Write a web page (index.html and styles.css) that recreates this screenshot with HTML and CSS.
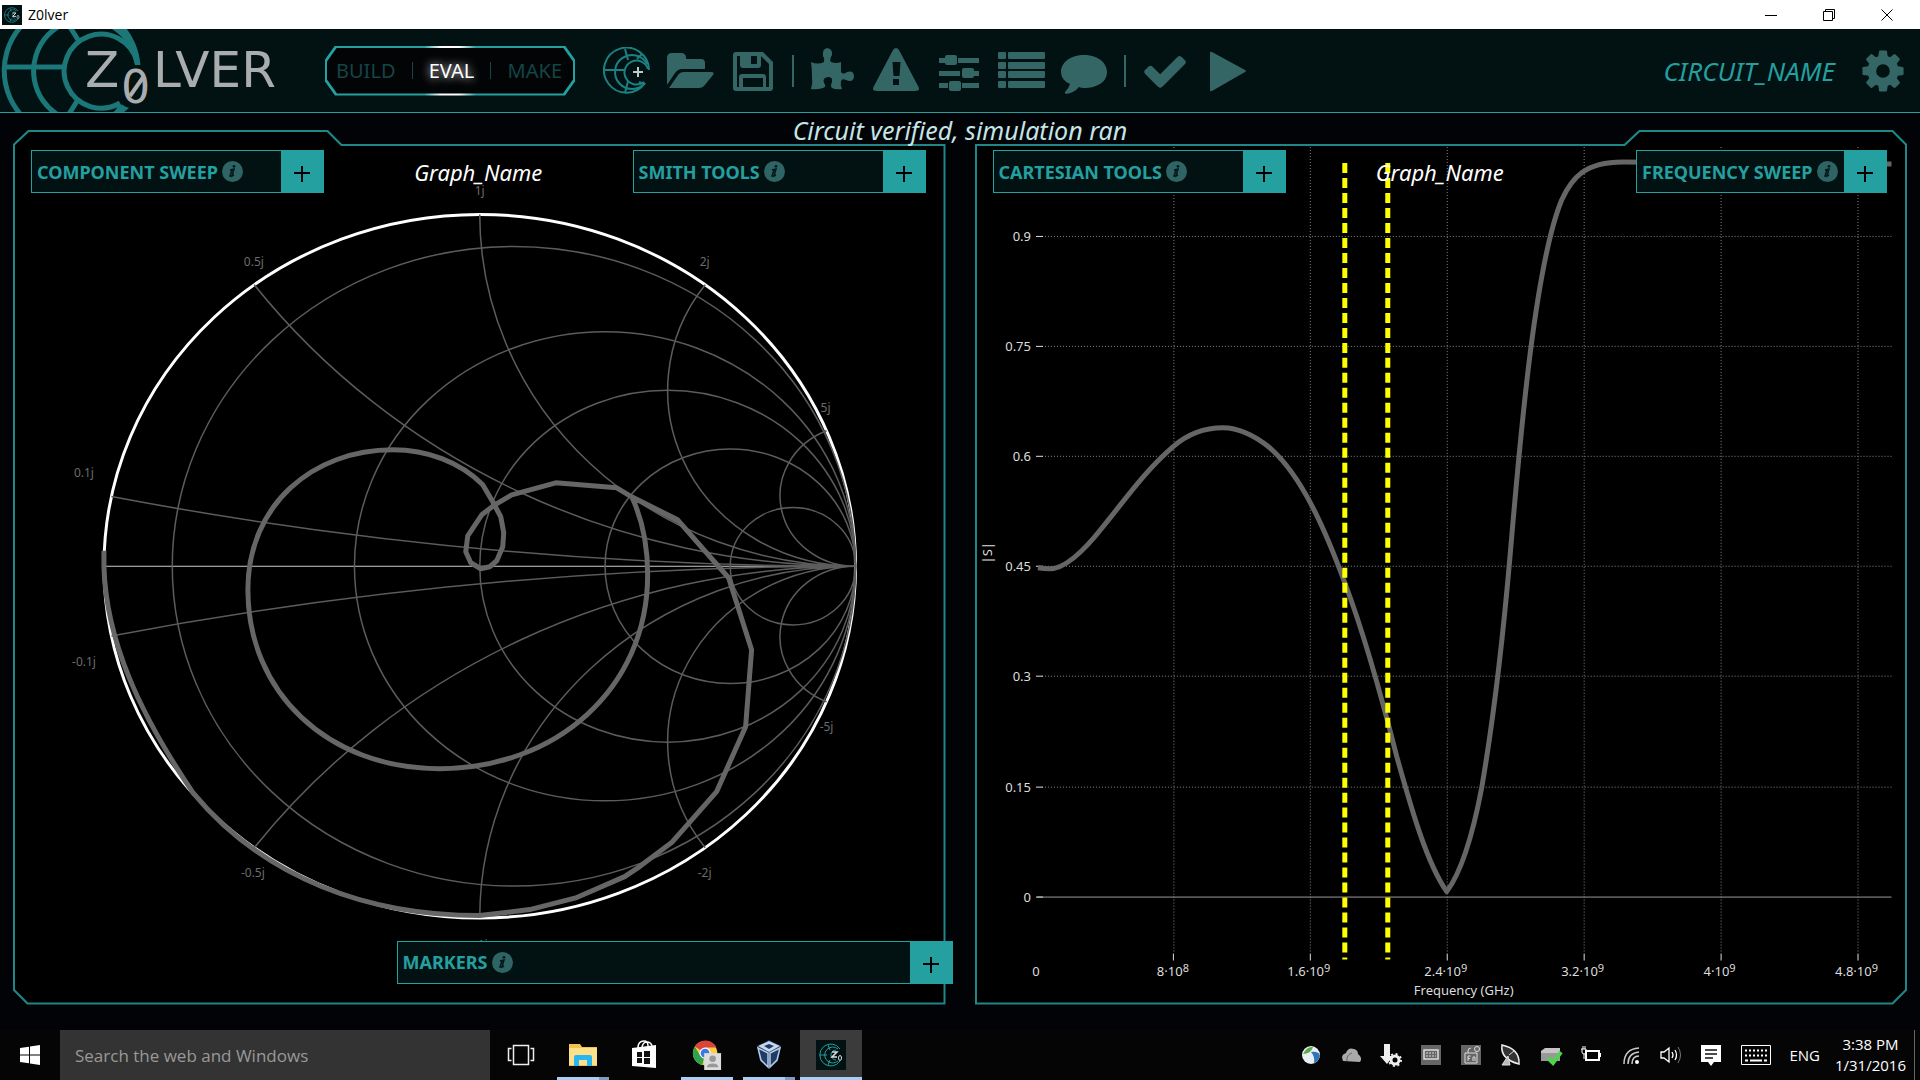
FILE: index.html
```html
<!DOCTYPE html>
<html lang="en">
<head>
<meta charset="utf-8">
<title>Z0lver</title>
<link rel="stylesheet" href="styles.css">
</head>
<body>
<svg class="defs" aria-hidden="true">
  <defs>
    <symbol id="app" viewBox="0 0 30 30">
      <rect width="30" height="30" fill="#021112"/>
      <g fill="none" stroke="#24a0a0">
        <path d="M24 9A11 11 0 1 0 24 21"/><path d="M22 9A8 8 0 1 0 22 21"/><path d="M20 10A5 5 0 1 0 20 20"/>
        <path d="M4 15h7M12 5l2 5M12 25l2-5"/>
      </g>
      <path d="M16 12h5l-5 5h5" fill="none" stroke="#ddd" stroke-width="1.5"/>
      <ellipse cx="24" cy="18" rx="1.500" ry="2.500" fill="none" stroke="#ddd"/>
    </symbol>
    <symbol id="info" viewBox="0 0 21 21">
      <circle cx="10.500" cy="10.500" r="10.500" fill="#2f6465"/>
      <path d="M8 9l4-1-2 7 2-1M8 9h2l-2 6 3 0" fill="none" stroke="#03191a" stroke-width="1.500"/>
      <circle cx="12" cy="5.300" r="1.400" fill="#03191a"/>
    </symbol>
    <clipPath id="logo-clip"><rect y="29" width="310" height="83"/></clipPath>
  </defs>
</svg>

<div class="titlebar">
  <svg class="titlebar-icon" aria-hidden="true"><use href="#app"/></svg>
  <span class="titlebar-name">Z0lver</span>
  <button class="win-btn" aria-label="Minimize"><svg viewBox="0 0 12 12"><path d="M0 6.500h12"/></svg></button>
  <button class="win-btn" aria-label="Restore"><svg viewBox="0 0 12 12"><path d="M.5 2.500h9v9h-9zM2.500 2.500v-2h9v9h-2"/></svg></button>
  <button class="win-btn" aria-label="Close"><svg viewBox="0 0 12 12"><path d="M.5.500l11 11M11.500.500l-11 11"/></svg></button>
</div>

<header class="header">
  <svg class="logo" viewBox="0 29 310 83" role="img" aria-label="Z0LVER">
    <g clip-path="url(#logo-clip)">
      <g fill="none" stroke="#1b7778" stroke-width="5">
        <path d="M138 65A67 67 0 1 0 124 112"/>
        <path d="M137 63A52 52 0 1 0 124 106"/>
        <path d="M137 62A37 37 0 1 0 120 103"/>
        <path d="M4 67h60M70 27l10 16M69 114l10-16"/>
      </g>
      <path d="M118 29h8q13 16 14 36h-5q-3-20-17-36zM119 104l10 4-6 5h-9z" fill="#1b7778"/>
    </g>
    <g class="logo-text">
      <text x="85" y="87">Z</text>
      <text class="logo-zero" x="121" y="103">0</text>
      <text x="153" y="87">LVER</text>
    </g>
    <path d="M130 96l14-20" stroke="#a9adad" stroke-width="4"/>
  </svg>

  <nav class="modes" aria-label="Mode">
    <button class="mode">BUILD</button>
    <span class="mode-sep"></span>
    <button class="mode mode-active">EVAL</button>
    <span class="mode-sep"></span>
    <button class="mode">MAKE</button>
  </nav>

  <div class="tools">
    <button class="icon-btn" aria-label="New Smith chart"><svg viewBox="0 0 48 48">
      <g fill="none" stroke="#1c8182" stroke-width="2">
        <path d="M46 23A22.500 22.500 0 1 0 42 36"/><path d="M44 17A17 17 0 1 0 42 36"/><path d="M45 22A12 12 0 1 0 41 35"/>
        <path d="M2 23h19M22 2l3 11M22 46l3-12M39 7l-5 5M41 37l-5-2"/>
      </g><path d="M30 25h10M35 20v10" stroke="#bcc" stroke-width="2"/></svg></button>
    <button class="icon-btn" aria-label="Open"><svg viewBox="0 0 48 48">
      <path d="M1 38V11q0-5 5-5h9q5 0 5 5v1h15q4 0 4 4v6H16q-4 0-7 4z"/><path d="M3 41l9-13q2-3 6-3h27q4 0 2 3l-9 11q-2 2-5 2z"/></svg></button>
    <button class="icon-btn" aria-label="Save"><svg viewBox="0 0 48 48">
      <path fill-rule="evenodd" d="M7 5h27l10 10v26q0 3-3 3H7q-3 0-3-3V8q0-3 3-3zM8 9v31h2V30q0-3 3-3h21q3 0 3 3v10h3V17l-8-8v9q0 3-3 3H14q-3 0-3-3V9zM14 31v9h20v-9zM22 9v8h6V9z"/></svg></button>
    <span class="tools-sep"></span>
    <button class="icon-btn" aria-label="Components"><svg viewBox="0 0 48 48">
      <path d="M2 15q7 3 13 0 1-3-1-6-1-7 4-8 6 1 5 7-3 5-1 7 5 2 10 0v10q2 3 6 0 7-2 7 5-1 6-8 3-4-2-5 1-1 4 1 8-6 1-10-1-2-2 0-6 1-5-4-5-6 1-4 6 3 4-1 5-6 2-12 1 2-6 1-12 0-8-1-15z"/></svg></button>
    <button class="icon-btn" aria-label="Warnings"><svg viewBox="0 0 48 48">
      <path fill-rule="evenodd" d="M21 3q3-4 6 0l19 36q3 5-3 5H5q-6 0-3-5zM20.500 15l1 14h6l1-14zM21 32v6h6v-6z"/></svg></button>
    <button class="icon-btn" aria-label="Settings"><svg viewBox="0 0 48 48">
      <path d="M4 11h7v5H4zM23 11h21v5H23zM4 24h21v5H4zM38 24h6v5h-6zM4 36h9v5H4zM27 36h17v5H27z"/>
      <rect x="10" y="8" width="12" height="10" rx="2"/><rect x="27" y="21" width="12" height="10" rx="2"/><rect x="14" y="34" width="12" height="10" rx="2"/></svg></button>
    <button class="icon-btn" aria-label="List"><svg viewBox="0 0 48 48">
      <rect y="5" width="8" height="7" rx="1"/><rect y="15" width="8" height="7" rx="1"/><rect y="24" width="8" height="7" rx="1"/><rect y="34" width="8" height="7" rx="1"/>
      <rect x="10" y="5" width="37" height="7" rx="1"/><rect x="10" y="15" width="37" height="7" rx="1"/><rect x="10" y="24" width="37" height="7" rx="1"/><rect x="10" y="34" width="37" height="7" rx="1"/></svg></button>
    <button class="icon-btn" aria-label="Comment"><svg viewBox="0 0 48 48">
      <path d="M23 8c13 0 23 7 23 17S36 41 23 41q-3 0-5-1-5 6-13 7-2-1-1-2 4-4 5-8Q0 33 0 25C0 15 10 8 23 8z"/></svg></button>
    <span class="tools-sep"></span>
    <button class="icon-btn" aria-label="Verify"><svg viewBox="0 0 1792 1792">
      <path d="M1671 566q0 40-28 68l-724 724-136 136q-28 28-68 28t-68-28l-136-136-362-362q-28-28-28-68t28-68l136-136q28-28 68-28t68 28l294 295 656-657q28-28 68-28t68 28l136 136q28 28 28 68z"/></svg></button>
    <button class="icon-btn" aria-label="Run"><svg viewBox="0 0 48 48"><path d="M6 6q0-2 2-1l33 18q2 1 0 2L8 44q-2 1-2-1z"/></svg></button>
  </div>

  <span class="circuit-name">CIRCUIT_NAME</span>
  <button class="icon-btn" aria-label="Preferences"><svg viewBox="0 0 1792 1792">
    <path d="M1152 896q0-106-75-181t-181-75-181 75-75 181 75 181 181 75 181-75 75-181zm512-109v222q0 12-8 23t-20 13l-185 28q-19 54-39 91 35 50 107 138 10 12 10 25t-9 23q-27 37-99 108t-94 71q-12 0-26-9l-138-108q-44 23-91 38-16 136-29 186-7 28-36 28h-222q-14 0-24.500-8.500t-11.500-21.500l-28-184q-49-16-90-37l-141 107q-10 9-25 9-14 0-25-11-126-114-165-168-7-10-7-23 0-12 8-23 15-21 51-66.500t54-70.500q-27-50-41-99l-183-27q-13-2-21-12.500t-8-23.500v-222q0-12 8-23t19-13l186-28q14-46 39-92-40-57-107-138-10-12-10-24 0-10 9-23 26-36 98.500-107.500t94.500-71.500q13 0 26 10l138 107q44-23 91-38 16-136 29-186 7-28 36-28h222q14 0 24.500 8.500t11.500 21.500l28 184q49 16 90 37l142-107q9-9 24-9 13 0 25 10 129 119 165 170 7 8 7 22 0 12-8 23-15 21-51 66.500t-54 70.500q26 50 41 98l183 28q13 2 21 12.500t8 23.500z"/></svg></button>
</header>

<p class="status">Circuit verified, simulation ran</p>

<main class="panels">
  <section class="panel panel-left">
    <svg class="chart" viewBox="13 130 933 875" role="img" aria-label="Smith chart">
      <g class="smith-grid" transform="translate(480 566.500) scale(376 352)">
        <circle class="smith-rim" r="1"/>
        <path class="smith-axis" d="M-1 0H1"/>
        <circle cx=".0909" r=".9091"/><circle cx=".3333" r=".6667"/><circle cx=".5" r=".5"/><circle cx=".6667" r=".3333"/><circle cx=".8333" r=".1667"/>
        <path d="M-.9802-.198A10 10 0 0 0 1 0M-.6-.8A2 2 0 0 0 1 0M0-1A1 1 0 0 0 1 0M.6-.8A.5.5 0 0 0 1 0M.923-.385A.2.2 0 0 0 1 0"/>
        <path d="M-.9802.198A10 10 0 0 1 1 0M-.6.8A2 2 0 0 1 1 0M0 1A1 1 0 0 1 1 0M.6.8A.5.5 0 0 1 1 0M.923.385A.2.2 0 0 1 1 0"/>
      </g>
      <path class="trace" d="M104 551V567C106 640 139 713 193 793C265 880 370 916 480 916L530 910L577 898L625 877L640 867L672 843L717 792L746 727L752 650L729 578L713 560L678 520L632 497L617 488L556 483L512 495L495 505L482 515L468 536L466 552L471 563L481 569L490 567L497 561L503 547L504 533L501 517L493 502L483 485C460 462 427 450 393 450C313 450 248 505 248 590C248 692 327 769 440 769C555 769 648 690 648 575C648 545 643 520 632 497L680 522"/>
      <g class="smith-labels">
        <text x="480" y="195">1j</text><text x="254" y="266">0.5j</text><text x="705" y="266">2j</text>
        <text x="826" y="412">5j</text><text x="84" y="477">0.1j</text><text x="84" y="666">-0.1j</text>
        <text x="253" y="877">-0.5j</text><text x="705" y="877">-2j</text><text x="827" y="731">-5j</text><text x="481" y="949">-1j</text>
      </g>
    </svg>
    <div class="overlay">
      <div class="bar">
        <div class="tool">
          <span class="tool-name">COMPONENT SWEEP</span><svg class="tool-info"><use href="#info"/></svg>
          <button class="tool-add" aria-label="Expand component sweep"></button>
        </div>
        <h2 class="graph-name">Graph_Name</h2>
        <div class="tool tool-end">
          <span class="tool-name">SMITH TOOLS</span><svg class="tool-info"><use href="#info"/></svg>
          <button class="tool-add" aria-label="Expand Smith tools"></button>
        </div>
      </div>
      <div class="tool tool-markers">
        <span class="tool-name">MARKERS</span><svg class="tool-info"><use href="#info"/></svg>
        <button class="tool-add" aria-label="Expand markers"></button>
      </div>
    </div>
  </section>

  <section class="panel panel-right">
    <svg class="chart" viewBox="975 130 933 875" role="img" aria-label="Cartesian chart of |S| against frequency">
      <path class="grid-dots" d="M1042 236.500H1892M1042 346.500H1892M1042 456.500H1892M1042 566.500H1892M1042 676.500H1892M1042 787.500H1892"/>
      <path class="grid-dots" d="M1174 147V954M1310.500 147V954M1447.500 147V954M1584.500 147V954M1721.500 147V954M1858.500 147V954"/>
      <path class="zero" d="M1037 897.500H1892"/>
      <path class="ticks" d="M1036 236.500h7M1036 346.500h7M1036 456.500h7M1036 566.500h7M1036 676.500h7M1036 787.500h7M1036 897.500h7M1173.500 954v7M1310.500 954v7M1447.500 954v7M1584.500 954v7M1721.500 954v7M1858.500 954v7"/>
      <path class="trace" d="M1038 568Q1044 569 1050 569C1066 569 1085 550 1103 527C1125 500 1146 470 1173 447C1188 434 1205 428 1223 428C1240 428 1255 436 1270 448C1302 476 1325 529 1345 583C1362 628 1380 690 1397 757C1410 803 1426 862 1447 892C1462 872 1474 830 1482 788C1494 718 1503 640 1510 560C1518 470 1533 270 1562 200C1572 178 1585 162 1623 162L1892 164"/>
      <path class="marker" d="M1345 163V960M1388 163V960"/>
      <g class="axis-y">
        <text x="1031" y="241">0.9</text><text x="1031" y="351">0.75</text><text x="1031" y="461">0.6</text><text x="1031" y="571">0.45</text>
        <text x="1031" y="681">0.3</text><text x="1031" y="792">0.15</text><text x="1031" y="902">0</text>
      </g>
      <g class="axis-x">
        <text x="1036" y="976">0</text>
        <text x="1173" y="976">8·10<tspan class="sup" dy="-4">8</tspan></text>
        <text x="1309" y="976">1.6·10<tspan class="sup" dy="-4">9</tspan></text>
        <text x="1446" y="976">2.4·10<tspan class="sup" dy="-4">9</tspan></text>
        <text x="1583" y="976">3.2·10<tspan class="sup" dy="-4">9</tspan></text>
        <text x="1720" y="976">4·10<tspan class="sup" dy="-4">9</tspan></text>
        <text x="1857" y="976">4.8·10<tspan class="sup" dy="-4">9</tspan></text>
        <text x="1464" y="995">Frequency (GHz)</text>
        <text transform="translate(992 553) rotate(-90)">|S|</text>
      </g>
    </svg>
    <div class="overlay">
      <div class="bar">
        <div class="tool">
          <span class="tool-name">CARTESIAN TOOLS</span><svg class="tool-info"><use href="#info"/></svg>
          <button class="tool-add" aria-label="Expand Cartesian tools"></button>
        </div>
        <h2 class="graph-name">Graph_Name</h2>
        <div class="tool tool-end tool-narrow">
          <span class="tool-name">FREQUENCY SWEEP</span><svg class="tool-info"><use href="#info"/></svg>
          <button class="tool-add" aria-label="Expand frequency sweep"></button>
        </div>
      </div>
    </div>
  </section>
</main>

<footer class="taskbar">
  <button class="start" aria-label="Start"><svg viewBox="0 0 20 20"><path fill="#fff" d="M0 3l9-1.300V9.500H0zM10 1.500L20 0v9.500H10zM0 10.500h9v7.800L0 17zM10 10.500h10V20l-10-1.500z"/></svg></button>
  <input class="search" type="text" aria-label="Search" placeholder="Search the web and Windows">
  <button class="task" aria-label="Task view"><svg viewBox="0 0 30 30"><path d="M7.500 5.500h15v19h-15zM5.500 8.500h-3v12h3M24.500 8.500h3v12h-3" fill="none" stroke="#eee" stroke-width="1.500"/></svg></button>
  <button class="task task-open task-multi" aria-label="File Explorer"><svg viewBox="0 0 30 30">
    <path d="M1 4h11l2 3h15v19H1z" fill="#f0c350"/><path d="M1 8h28v17H1z" fill="#fde08a"/><path d="M6 26V17q0-2 2-2h14q2 0 2 2v9h-5v-6h-8v6z" fill="#29b6f0"/></svg></button>
  <button class="task" aria-label="Store"><svg viewBox="0 0 30 30">
    <path d="M2 8l24-3v23L2 26z" fill="#fff"/><path d="M8 8q0-7 6-7 4 0 4 5M12 7q1-5 5-5 4 0 5 4" fill="none" stroke="#fff" stroke-width="1.500"/><path d="M7 12h5v5H7zM14 11h6v6h-6zM7 18h5v5H7zM14 18h6v6h-6z" fill="#111"/></svg></button>
  <button class="task task-open" aria-label="Chrome"><svg viewBox="0 0 32 32">
    <circle cx="14" cy="14" r="13" fill="#fc4"/><path d="M14 14L3 7A13 13 0 0 1 26 8H14z" fill="#d9453a"/><path d="M14 14l-3 12.700A13 13 0 0 1 3 7l6 10z" fill="#2da44e"/><circle cx="14" cy="14" r="6" fill="#fff"/><circle cx="14" cy="14" r="4.700" fill="#3b78e7"/>
    <rect x="13" y="14" width="18" height="18" fill="#ddd"/><circle cx="22" cy="20" r="3.500" fill="#999"/><path d="M16 29q0-4 6-4t6 4z" fill="#999"/></svg></button>
  <button class="task task-open task-multi" aria-label="VirtualBox"><svg viewBox="0 0 30 30">
    <path d="M15 0l12 6-3 15-9 8-9-8L3 6z" fill="#1d3c66"/><path d="M15 1l11 5-11 6L4 6z" fill="#c9d7ea"/><path d="M15 4l5 2-5 3-5-3z" fill="#1d3c66"/><path d="M14 13L4 8l3 12 7 7zM16 13l10-5-3 12-7 7z" fill="none" stroke="#b8c9e0" stroke-width="1.500"/></svg></button>
  <button class="task task-open task-current" aria-label="Z0lver"><svg><use href="#app"/></svg></button>

  <div class="tray">
    <svg viewBox="0 0 24 24"><circle cx="12" cy="12" r="9" fill="#e8eef2"/><path d="M4 11q4-8 10-7-2 7-10 7z" fill="#5aa84a"/><path d="M12 9q8-1 9 4-2 6-6 7 1-7-3-11z" fill="#2d74b8"/></svg>
    <svg viewBox="0 0 24 24"><path d="M4 18q-3-6 3-8 2-6 8-4 4 1 4 5 5 4 2 8z" fill="#aaa"/><path d="M8 18q-1-6 5-8" fill="none" stroke="#666"/></svg>
    <svg viewBox="0 0 24 24"><path d="M5 1h6v12h3l-6 8-7-8h4z" fill="#eee"/><circle cx="16" cy="17" r="4" fill="none" stroke="#eee" stroke-width="3"/><circle cx="16" cy="17" r="6" fill="none" stroke="#eee" stroke-width="2" stroke-dasharray="2 2.700"/></svg>
    <svg viewBox="0 0 24 24"><path d="M2 2h20v20H2z" fill="#666"/><path d="M5 7h14v9H5z" fill="none" stroke="#ddd" stroke-width="1.500"/><path d="M7 10h10M7 13h10" stroke="#ddd" stroke-dasharray="2 1"/></svg>
    <svg viewBox="0 0 24 24"><path d="M2 2h20v20H2z" fill="#666"/><path d="M6 10h12v10H6zM9 10V8q0-3 3-3M9 18v-5h2.500M9 15.500h2M14 18v-4h2v4" fill="none" stroke="#ddd"/><circle cx="18" cy="6" r="2.500" fill="none" stroke="#ddd"/></svg>
    <svg viewBox="0 0 24 24"><path d="M3 2q-2 14 17 19Q21 6 3 2z" fill="#333" stroke="#eee" stroke-width="1.500"/><path d="M9 13l-6 9h8zM10 12l5-4" fill="#bbb" stroke="#ddd"/></svg>
    <svg viewBox="0 0 24 24"><path d="M2 8l4-3h15v12H2z" fill="#c9c3c9"/><path d="M2 10h19v8H2z" fill="#999"/><path d="M9 15l5 5 8-11" fill="none" stroke="#4fd34f" stroke-width="4"/></svg>
    <svg viewBox="0 0 24 24"><path d="M7 8h13v9H7zM21 10v4" fill="none" stroke="#fff" stroke-width="2"/><path d="M2 6h5v3q0 2-2 2t-2-2V6M4 3v3M6 3v3M5 11v5" fill="none" stroke="#fff"/></svg>
    <svg viewBox="0 0 24 24"><path d="M5 21Q5 6 20 5M9 21Q9 10 20 9M13 21q0-8 7-8" fill="none" stroke="#ccc" stroke-width="1.500"/><circle cx="18" cy="19" r="2" fill="#fff"/></svg>
    <svg viewBox="0 0 24 24"><path d="M2 9h3l5-4v14l-5-4H2zM13 9q2 3 0 6M16 7q3 5 0 10" fill="none" stroke="#fff" stroke-width="1.300"/><path d="M19 4q5 8 0 16" fill="none" stroke="#777"/></svg>
    <svg viewBox="0 0 24 24"><path d="M2 2h20v17h-7l-3 4-3-4H2z" fill="#fff"/><path d="M6 7h12M6 11h12M6 15h8" stroke="#111" stroke-width="1.500"/></svg>
  </div>
  <svg class="keyboard" viewBox="0 0 30 20"><path d="M.5.500h29v19H.5z" fill="none" stroke="#fff"/><path d="M4 5.500h22M4 10.500h22" stroke="#fff" stroke-width="2" stroke-dasharray="2 2"/><path d="M4 15.500h3M9 15.500h12M23 15.500h3" stroke="#fff" stroke-width="2"/></svg>
  <span class="lang">ENG</span>
  <div class="clock"><time>3:38 PM</time><time>1/31/2016</time></div>
</footer>
</body>
</html>
```
FILE: styles.css
```css
:root {
  --teal: #24a0a0;
  --line: #1f8787;
  --muted: #356666;
  --deep: #021112;
  --ui: "Noto Sans", "DejaVu Sans", sans-serif;
  --system: "Open Sans", "Noto Sans", sans-serif;
}

* { box-sizing: border-box; }

body {
  display: flex;
  flex-direction: column;
  min-height: 100vh;
  margin: 0;
  background: #020307;
  color: #fff;
  font-family: var(--ui);
}

button {
  padding: 0;
  border: 0;
  background: none;
  color: inherit;
  font-family: inherit;
}

.defs { position: absolute; width: 0; height: 0; }

/* Window title bar */
.titlebar {
  display: flex;
  align-items: center;
  height: 29px;
  padding: 0 4px 0 2px;
  background: #fff;
  color: #000;
  font-family: var(--system);
}
.titlebar-icon { width: 20px; height: 20px; }
.titlebar-name { flex: 1; padding-left: 6px; font-size: 14px; }
.win-btn { display: grid; place-items: center; width: 58px; height: 29px; }
.win-btn svg { width: 12px; height: 12px; fill: none; stroke: #000; }

/* Application header */
.header {
  display: flex;
  align-items: center;
  height: 84px;
  padding-right: 13px;
  border-bottom: 1px solid var(--teal);
  background: var(--deep);
}
.logo { width: 310px; height: 83px; overflow: visible; }
.logo-text { fill: #a9adad; font-family: "DejaVu Sans", sans-serif; font-size: 50px; }
.logo-zero { font-size: 46px; stroke: var(--deep); stroke-width: 4px; paint-order: stroke; }

.modes {
  position: relative;
  isolation: isolate;
  display: flex;
  align-items: center;
  justify-content: space-between;
  width: 250px;
  height: 50px;
  margin-left: 15px;
  padding: 0 13px 0 11px;
}
.modes::before,
.modes::after {
  content: "";
  position: absolute;
  z-index: -1;
  inset: 0;
  background: radial-gradient(ellipse 28px 60px at 50% 50%, #fff 50%, var(--teal));
  clip-path: polygon(10px 0, calc(100% - 10px) 0, 100% 14px, 100% calc(100% - 14px), calc(100% - 10px) 100%, 10px 100%, 0 calc(100% - 14px), 0 14px);
}
.modes::after {
  inset: 2px;
  background: #030406;
}
.mode { color: #124647; font-size: 20px; line-height: 28px; }
.mode-active { color: #fff; text-shadow: 0 0 10px #fff; }
.mode-sep { width: 1px; height: 17px; background: #124647; }

.tools { display: flex; align-items: center; gap: 15px; margin-left: 28px; }
.tools-sep { width: 2px; height: 32px; background: var(--muted); }
.icon-btn { width: 48px; height: 48px; }
.icon-btn svg { display: block; width: 48px; height: 48px; fill: var(--muted); }

.circuit-name {
  margin-left: auto;
  padding-right: 24px;
  color: var(--teal);
  font-size: 26px;
  font-style: italic;
}

.status {
  z-index: 1;
  height: 34px;
  margin: 0 0 -17px;
  color: #c4e6e6;
  font-size: 25px;
  font-style: italic;
  line-height: 34px;
  text-align: center;
}

/* Chart panels */
.panels {
  display: grid;
  grid-template-columns: 1fr 1fr;
  gap: 29px;
  padding: 0 13px 25px;
}
.panel { position: relative; isolation: isolate; display: grid; }
.panel::before,
.panel::after { content: ""; position: absolute; inset: 0; z-index: -2; background: var(--line); }
.panel::after { inset: 2px; z-index: -1; background: #000; }
.panel-left::before { clip-path: polygon(0 14px, 15px 0, 315px 0, 329px 14px, 100% 14px, 100% 100%, 14px 100%, 0 calc(100% - 14px)); }
.panel-left::after { clip-path: polygon(0 13px, 14px 0, 312px 0, 326px 14px, 100% 14px, 100% 100%, 13px 100%, 0 calc(100% - 13px)); }
.panel-right::before { clip-path: polygon(0 14px, calc(100% - 283px) 14px, calc(100% - 268px) 0, calc(100% - 14px) 0, 100% 14px, 100% calc(100% - 14px), calc(100% - 14px) 100%, 0 100%); }
.panel-right::after { clip-path: polygon(0 14px, calc(100% - 280px) 14px, calc(100% - 265px) 0, calc(100% - 13px) 0, 100% 13px, 100% calc(100% - 13px), calc(100% - 13px) 100%, 0 100%); }

.chart,
.overlay { grid-area: 1 / 1; }
.chart { display: block; width: 100%; height: auto; font-size: 13px; }
.overlay {
  display: flex;
  flex-direction: column;
  justify-content: space-between;
  padding: 20px 20px 21px 18px;
}
.bar { display: grid; grid-template-columns: 1fr 1fr; align-items: center; }
.graph-name {
  grid-area: 1 / 1 / 2 / 3;
  justify-self: center;
  margin: 0;
  font-size: 22px;
  font-style: italic;
  font-weight: 400;
}

.tool {
  grid-area: 1 / 1;
  display: flex;
  align-items: center;
  width: 293px;
  height: 43px;
  padding-left: 5px;
  border: 1px solid var(--teal);
  background: var(--deep);
}
.tool-end { grid-area: 1 / 2; justify-self: end; }
.tool-narrow { width: 251px; }
.tool-markers { align-self: flex-end; width: 556px; margin-right: -27px; }
.tool-name { color: var(--teal); font-size: 18px; font-weight: 700; }
.tool-info { width: 21px; height: 21px; margin-left: 4px; }
.tool-add {
  align-self: stretch;
  width: 42px;
  margin-left: auto;
  background:
    linear-gradient(#000, #000) 50% 55% / 16px 2px no-repeat,
    linear-gradient(#000, #000) 50% 60% / 2px 16px no-repeat,
    var(--teal);
}

.smith-grid { fill: none; stroke: #5c5c5c; }
.smith-grid > * { vector-effect: non-scaling-stroke; stroke-width: 1.5px; }
.smith-grid .smith-rim { stroke: #fff; stroke-width: 3px; }
.smith-grid .smith-axis { stroke: #ccc; stroke-width: 1px; }
.trace { fill: none; stroke: #666; stroke-width: 5px; stroke-linejoin: round; }
.smith-labels { fill: #6c6c6c; font-size: 12px; text-anchor: middle; }
.grid-dots { fill: none; stroke: #888; stroke-dasharray: 1 2; }
.zero { stroke: #999; }
.ticks { stroke: #ddd; stroke-width: 1px; }
.marker { stroke: #ff0; stroke-width: 5px; stroke-dasharray: 10 5; }
.axis-y { fill: #ddd; text-anchor: end; }
.axis-x { fill: #ddd; text-anchor: middle; }
.sup { font-size: 11px; }

/* Taskbar */
.taskbar {
  display: flex;
  height: 50px;
  margin-top: auto;
  padding-right: 5px;
  background: #050506;
  font-family: var(--system);
}
.start { display: grid; place-items: center; width: 60px; }
.start svg { width: 20px; height: 20px; }
.search {
  width: 430px;
  padding: 0 15px;
  border: 0;
  background: #333;
  color: #fff;
  font-family: inherit;
  font-size: 17px;
}
.search::placeholder { color: #999; opacity: 1; }
.task {
  display: grid;
  place-items: center;
  width: 62px;
  border: solid transparent;
  border-width: 0 5px;
}
.task svg { width: 30px; height: 30px; }
.task-open { background: linear-gradient(#a9cdf5, #a9cdf5) 0 100% / 100% 3px no-repeat padding-box; }
.task-multi {
  background:
    linear-gradient(#7f9dc0, #7f9dc0) 100% 100% / 10px 3px no-repeat padding-box,
    linear-gradient(#a9cdf5, #a9cdf5) 0 100% / 100% 3px no-repeat padding-box;
}
.task-current { border-width: 0; background-color: #3b3b3b; }

.tray { display: flex; align-items: center; gap: 16px; margin-left: auto; }
.tray svg { width: 24px; height: 24px; }
.keyboard { align-self: center; width: 30px; height: 20px; margin-left: 18px; }
.lang { align-self: center; margin-left: 18px; font-size: 15px; }
.clock {
  display: flex;
  flex-direction: column;
  justify-content: center;
  margin-left: 15px;
  padding-right: 8px;
  border-right: 1px solid #666;
  font-size: 15px;
  line-height: 21px;
  text-align: center;
}
```
